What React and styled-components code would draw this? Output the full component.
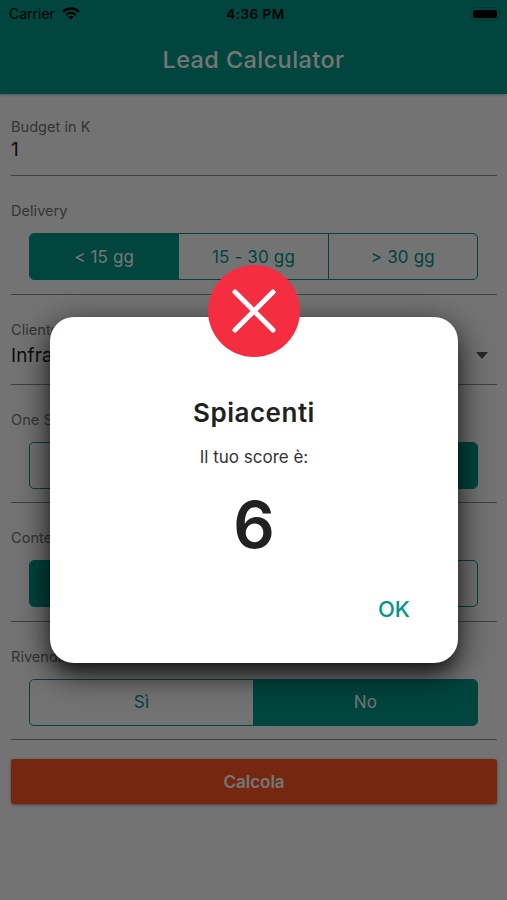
import React, { useState } from 'react'
import styled, { createGlobalStyle } from 'styled-components'

const GlobalStyle = createGlobalStyle`
  * {
    box-sizing: border-box;
  }
  body {
    margin: 0;
    font-family: Inter, "Liberation Sans", sans-serif;
    background: #fafafa;
  }
  button {
    font-family: inherit;
    cursor: pointer;
  }
`;
const Screen = styled.div`
  position: relative;
  width: 507px;
  height: 900px;
  overflow: hidden;
  background: #fafafa;
  color: #212121;
`;
const Header = styled.header`
  height: 94px;
  background: #009688;
  box-shadow: 0 1px 3px rgba(0, 0, 0, 0.25);
`;
const StatusBar = styled.div`
  display: grid;
  grid-template-columns: 1fr auto 1fr;
  align-items: center;
  height: 27px;
  padding: 0 7px 0 9px;
  color: #000;
`;
const Carrier = styled.div`
  display: flex;
  align-items: center;
  gap: 7px;
  font-size: 14px;
`;
const Clock = styled.div`
  padding-left: 2px;
  font-size: 13.5px;
  font-weight: 600;
  letter-spacing: 0.5px;
`;
const Battery = styled.div`
  justify-self: end;
  width: 30px;
  height: 14px;
  padding: 2px;
  border: 1px solid rgba(0, 0, 0, 0.2);
  border-radius: 5px;
  &::after {
    content: "";
    display: block;
    height: 100%;
    border-radius: 2px;
    background: #000;
  }
`;
const Title = styled.h1`
  margin: 0;
  padding-top: 17px;
  text-align: center;
  font-size: 23.5px;
  line-height: 32px;
  font-weight: 500;
  letter-spacing: 0.4px;
  color: #fff;
`;
const Form = styled.main`
  display: flex;
  flex-direction: column;
  padding: 0 10px 0 11px;
`;
const Field = styled.div`
  height: ${({ $height }) => $height}px;
  padding-top: ${({ $top }) => $top || 26}px;
  border-bottom: 1px solid #8f8f8f;
`;
const Label = styled.div`
  font-size: 14.5px;
  line-height: 18px;
  letter-spacing: 0.05px;
  color: #757575;
`;
const Value = styled.div`
  display: flex;
  align-items: center;
  justify-content: space-between;
  padding-right: 9px;
  margin-top: ${({ $gap }) => $gap || 0}px;
  font-size: 19px;
  line-height: 26px;
  letter-spacing: 0.1px;
`;
const Segmented = styled.div`
  display: flex;
  height: 47px;
  margin: 13px 19px 0 18px;
  border: 1px solid #009688;
  border-radius: 5px;
  overflow: hidden;
`;
const Segment = styled.button`
  flex: 1;
  padding: 0;
  border: none;
  border-left: ${({ $first }) => ($first ? 'none' : '1px solid #009688')};
  background: ${({ $active }) => ($active ? '#009688' : 'transparent')};
  color: ${({ $active }) => ($active ? '#fff' : '#009688')};
  font-size: 17px;
  letter-spacing: 0.15px;
`;
const Submit = styled.button`
  height: 45px;
  margin-top: 19px;
  border: none;
  border-radius: 3px;
  background: #ff5722;
  box-shadow: 0 1px 3px rgba(0, 0, 0, 0.4);
  color: #fff;
  font-size: 17px;
  font-weight: 600;
`;
const Overlay = styled.div`
  position: absolute;
  inset: 0;
  display: flex;
  align-items: flex-start;
  justify-content: center;
  padding-top: 317px;
  padding-left: 1px;
  background: rgba(0, 0, 0, 0.54);
`;
const Dialog = styled.div`
  position: relative;
  display: flex;
  flex-direction: column;
  align-items: center;
  width: 408px;
  height: 346px;
  padding-top: 78px;
  border-radius: 24px;
  background: #fff;
  box-shadow: 0 12px 16px -6px rgba(0, 0, 0, 0.5), 0 10px 30px 3px rgba(0, 0, 0, 0.65);
`;
const Badge = styled.div`
  position: absolute;
  top: -52px;
  left: 50%;
  width: 92px;
  height: 92px;
  margin-left: -46px;
  border-radius: 50%;
  background: #f52d41;
`;
const DialogTitle = styled.h2`
  margin: 0;
  font-size: 26px;
  line-height: 36px;
  font-weight: 600;
  letter-spacing: 0.5px;
`;
const Message = styled.p`
  margin: 14px 0 0;
  font-size: 17px;
  line-height: 24px;
  color: #333;
`;
const Score = styled.div`
  margin-top: 18px;
  font-size: 65px;
  line-height: 76px;
  font-weight: 600;
`;
const OkButton = styled.button`
  align-self: flex-end;
  margin: 31px 48px 0 0;
  padding: 0;
  border: none;
  background: none;
  color: #009688;
  font-size: 22px;
  line-height: 30px;
  font-weight: 500;
`;

const WifiIcon = () => (
  <svg width="18" height="13" viewBox="0 0 18 13" fill="none" stroke="#000" strokeWidth="2.3">
    <path d="M1 4.7C5.5.4 12.5.4 17 4.7" />
    <path d="M4 7.8C6.9 5.1 11.1 5.1 14 7.8" />
    <path d="M6.2 9.8C7.8 8.4 10.2 8.4 11.8 9.8L9 12.6Z" fill="#000" stroke="none" />
  </svg>
);

const Choice = ({ label, options, initial, height, top }) => {
  const [selected, setSelected] = useState(initial);
  return (
    <Field $height={height} $top={top}>
      <Label>{label}</Label>
      <Segmented>
        {options.map((option, i) => (
          <Segment key={option} $first={i === 0} $active={i === selected} onClick={() => setSelected(i)}>
            {option}
          </Segment>
        ))}
      </Segmented>
    </Field>
  );
};

const App = () => {
  const [open, setOpen] = useState(true);
  return (
    <Screen>
      <GlobalStyle />
      <Header>
        <StatusBar>
          <Carrier>
            Carrier
            <WifiIcon />
          </Carrier>
          <Clock>4:36 PM</Clock>
          <Battery />
        </StatusBar>
        <Title>Lead Calculator</Title>
      </Header>
      <Form>
        <Field $height={82} $top={24}>
          <Label>Budget in K</Label>
          <Value $gap={1}>1</Value>
        </Field>
        <Choice label="Delivery" options={['< 15 gg', '15 - 30 gg', '> 30 gg']} initial={0} height={118.5} />
        <Field $height={90}>
          <Label>Cliente</Label>
          <Value $gap={4}>
            Infrastrutture
            <svg width="12" height="7" viewBox="0 0 12 7">
              <path d="M0 0h12L6 7z" fill="#555" />
            </svg>
          </Value>
        </Field>
        <Choice label="One Shot" options={['Sì', 'No']} initial={1} height={118.5} />
        <Choice label="Contenuti" options={['Sì', 'No']} initial={0} height={118.5} />
        <Choice label="Rivendibile" options={['Sì', 'No']} initial={1} height={118.5} />
        <Submit>Calcola</Submit>
      </Form>
      {open && (
        <Overlay>
          <Dialog>
            <Badge>
              <svg width="92" height="92" viewBox="0 0 92 92">
                <path d="M27 27L65 65M65 27L27 65" stroke="#fff" strokeWidth="5" strokeLinecap="round" />
              </svg>
            </Badge>
            <DialogTitle>Spiacenti</DialogTitle>
            <Message>Il tuo score è:</Message>
            <Score>6</Score>
            <OkButton onClick={() => setOpen(false)}>OK</OkButton>
          </Dialog>
        </Overlay>
      )}
    </Screen>
  )
}

export default App
